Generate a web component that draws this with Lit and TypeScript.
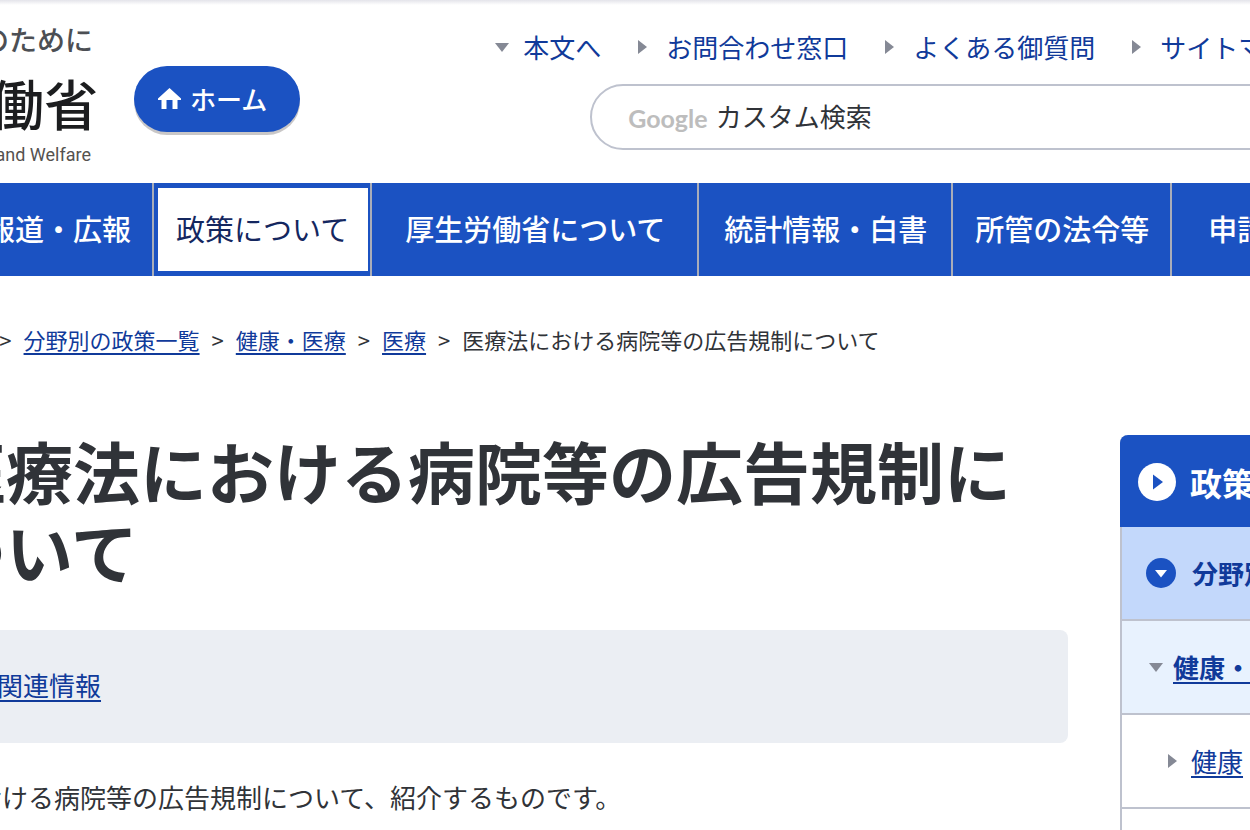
import { LitElement, html, css, svg } from "lit";
import { customElement } from "lit/decorators.js";

const right = svg`<path d="M0 0 L9 7 L0 14 Z" fill="currentColor" />`;
const down = svg`<path d="M0 0 H14 L7 9 Z" fill="currentColor" />`;
const arrowRight = html`<svg class="tri" width="9" height="14" aria-hidden="true">${right}</svg>`;
const arrowDown = html`<svg class="tri" width="14" height="9" aria-hidden="true">${down}</svg>`;

@customElement("app-root")
export class AppRoot extends LitElement {
  static styles = css`
    :host {
      display: block;
      min-height: 100vh;
      overflow: hidden;
      background: #fff;
      color: #303338;
      font-family: "Noto Sans CJK JP", "Liberation Sans", sans-serif;
      font-size: 26px;
      line-height: 40px;
    }
    * {
      box-sizing: border-box;
    }
    a {
      color: #103a9a;
      text-decoration-thickness: 2px;
      text-underline-offset: 4px;
    }
    ul,
    ol {
      list-style: none;
      margin: 0;
      padding: 0;
    }
    .tri {
      display: block;
      color: #858995;
    }
    .page {
      margin: 0 -250px 0 -144px;
    }
    .top {
      height: 5px;
      background: linear-gradient(#e4e4ea, #fff);
    }
    .header {
      display: flex;
      align-items: flex-start;
      padding-bottom: 14px;
    }
    .brand {
      width: 242px;
      padding-top: 14px;
      text-align: right;
      white-space: nowrap;
      color: #4c4f54;
      text-decoration: none;
    }
    .brand span {
      display: flex;
      justify-content: flex-end;
    }
    .motto {
      font-size: 28px;
      line-height: 40px;
      padding-right: 5px;
      font-weight: 500;
    }
    .ministry {
      font-size: 54px;
      line-height: 76px;
      padding-top: 6px;
      color: #1c1d1f;
      font-weight: 500;
    }
    .english {
      font-family: Roboto, "Liberation Sans", sans-serif;
      font-size: 18px;
      line-height: 28px;
      padding-right: 7px;
      color: #55524f;
    }
    .home {
      display: flex;
      align-items: center;
      gap: 9px;
      height: 66px;
      margin: 61px 0 0 36px;
      padding: 0 33px 0 24px;
      border-radius: 33px;
      background: #1b52c2;
      box-shadow: 0 3px 0 #c9c7c7;
      color: #fff;
      font-weight: 500;
      text-decoration: none;
      white-space: nowrap;
    }
    .tools {
      flex: 1;
      margin-left: 195px;
      padding-top: 22px;
    }
    .links {
      display: flex;
      gap: 37px;
      white-space: nowrap;
    }
    .links a {
      display: grid;
      grid-template-columns: 28px auto;
      align-items: center;
      text-decoration: none;
    }
    .search {
      display: flex;
      align-items: center;
      gap: 8px;
      height: 66px;
      margin: 17px 100px 0 95px;
      padding: 0 36px;
      border: 2px solid #bec2ce;
      border-radius: 33px;
    }
    .google {
      font-family: Lato, sans-serif;
      font-size: 25px;
      line-height: 32px;
      padding-top: 2px;
      font-weight: 700;
      color: #bdbdbd;
    }
    .search input {
      flex: 1;
      min-width: 0;
      height: 48px;
      padding: 0 0 4px;
      border: 0;
      outline: 0;
      background: none;
      font: inherit;
      color: inherit;
    }
    .search input::placeholder {
      color: #303338;
      opacity: 1;
    }
    .nav {
      display: flex;
      background: #1b52c2;
      padding-left: 108px;
    }
    .nav a {
      display: block;
      padding: 25px 21px 28px 22px;
      border-right: 2px solid #a9adb9;
      color: #fff;
      font-size: 29px;
      line-height: 40px;
      font-weight: 500;
      text-decoration: none;
      white-space: nowrap;
    }
    .nav .mid {
      padding-inline: 25px 24px;
    }
    .nav .wide {
      padding-inline: 33px 32px;
    }
    .nav .last {
      padding-inline: 36px;
    }
    .nav .current {
      padding: 5px 2px 5px 4px;
    }
    .current span {
      display: block;
      padding: 20px 19px 23px 18px;
      background: #fff;
      color: #14275f;
      font-weight: 400;
    }
    .crumbs {
      display: flex;
      gap: 12px;
      padding-top: 48px;
      font-size: 22px;
      line-height: 30px;
      white-space: nowrap;
    }
    .crumbs li {
      display: flex;
      gap: 12px;
    }
    .crumbs li + li::before {
      content: ">";
    }
    .columns {
      display: grid;
      grid-template-columns: minmax(0, 1fr) 380px;
      gap: 52px;
      padding-top: 76px;
    }
    h1 {
      margin: 0 0 40px;
      padding-left: 83px;
      font-size: 67px;
      line-height: 80px;
      font-weight: 700;
    }
    .related {
      padding: 35px 141px 38px;
      border-radius: 8px;
      background: #ebeef3;
    }
    .lead {
      margin: 0;
      padding: 34px 16px;
    }
    .side {
      margin-top: 5px;
      border: 2px solid #bec2ce;
      border-top: 0;
      border-radius: 8px 8px 0 0;
    }
    .side h2 {
      display: flex;
      align-items: center;
      gap: 14px;
      height: 92px;
      margin: 0 -2px;
      padding: 2px 18px 0;
      border-radius: 8px 8px 0 0;
      background: #1b52c2;
      color: #fff;
      font-size: 32px;
      line-height: 48px;
    }
    .side a {
      display: flex;
      align-items: center;
      height: 94px;
      border-bottom: 2px solid #bec2ce;
      white-space: nowrap;
    }
    .side .section {
      gap: 16px;
      padding-left: 24px;
      background: #c3d8fb;
      font-weight: 700;
      text-decoration: none;
    }
    .side .group {
      gap: 10px;
      padding-left: 27px;
      background: #e8f2fe;
      font-weight: 700;
    }
    .side .leaf {
      gap: 14px;
      padding-left: 46px;
    }
  `;

  render() {
    return html`
      <div class="page">
        <div class="top"></div>
        <header class="header">
          <a class="brand" href="#">
            <span class="motto">のために</span>
            <span class="ministry">労働省</span>
            <span class="english">Labour and Welfare</span>
          </a>
          <a class="home" href="#">
            <svg width="23" height="22" viewBox="0 0 23 22" aria-hidden="true">
              <path fill="#fff" d="M11.500 0 L23 10.500 V12 H19.500 V21 H14.500 V12 H8.500 V21 H3.500 V12 H0 V10.500 Z" />
            </svg>
            <span>ホーム</span>
          </a>
          <div class="tools">
            <ul class="links">
              <li><a href="#main">${arrowDown}本文へ</a></li>
              <li><a href="#">${arrowRight}お問合わせ窓口</a></li>
              <li><a href="#">${arrowRight}よくある御質問</a></li>
              <li><a href="#">${arrowRight}サイトマップ</a></li>
            </ul>
            <form class="search" role="search">
              <label class="google" for="q">Google</label>
              <input id="q" type="text" placeholder="カスタム検索" />
            </form>
          </div>
        </header>
        <nav class="nav">
          <a href="#">報道・広報</a>
          <a class="current" href="#"><span>政策について</span></a>
          <a class="wide" href="#">厚生労働省について</a>
          <a class="mid" href="#">統計情報・白書</a>
          <a href="#">所管の法令等</a>
          <a class="last" href="#">申請・募集・情報公開</a>
        </nav>
        <ol class="crumbs">
          <li><a href="#">政策について</a></li>
          <li><a href="#">分野別の政策一覧</a></li>
          <li><a href="#">健康・医療</a></li>
          <li><a href="#">医療</a></li>
          <li><span>医療法における病院等の広告規制について</span></li>
        </ol>
        <div class="columns">
          <main id="main">
            <h1>医療法における病院等の広告規制について</h1>
            <div class="related"><a href="#">関連情報</a></div>
            <p class="lead">医療法における病院等の広告規制について、紹介するものです。</p>
          </main>
          <aside class="side">
            <h2>
              <svg width="38" height="38" viewBox="0 0 38 38" aria-hidden="true">
                <circle cx="19" cy="19" r="19" fill="#fff" />
                <path d="M15 11.500 L25 19 L15 26.500 Z" fill="#1b52c2" />
              </svg>
              政策について
            </h2>
            <a class="section" href="#">
              <svg width="30" height="30" viewBox="0 0 30 30" aria-hidden="true">
                <circle cx="15" cy="15" r="15" fill="#1b52c2" />
                <path d="M9 12 H21 L15 19.500 Z" fill="#fff" />
              </svg>
              分野別の政策一覧
            </a>
            <a class="group" href="#">${arrowDown}<span>健康・医療</span></a>
            <a class="leaf" href="#">${arrowRight}<span>健康</span></a>
            <a class="leaf" href="#">${arrowRight}<span>食品</span></a>
          </aside>
        </div>
      </div>
    `;
  }
}
